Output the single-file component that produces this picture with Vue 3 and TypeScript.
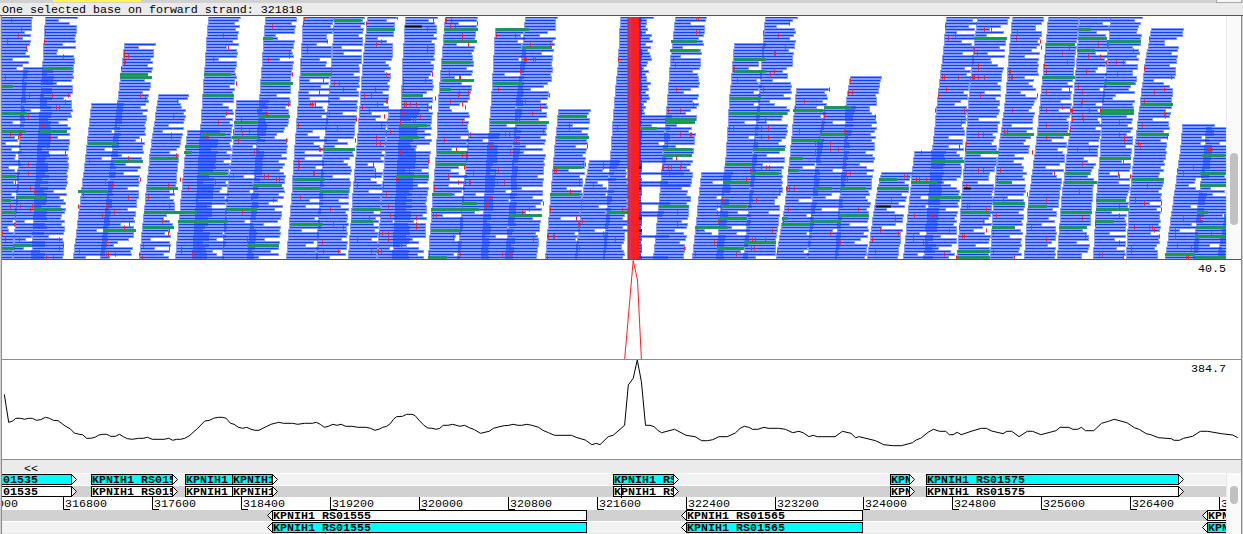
<script setup lang="ts">
interface Stack { top: number; end: number; edge: number[][]; width: number }
interface Gene { x1: number; x2: number; label: string; tip: boolean; textX?: number }

const ROW = 3
const FIRST = 17
const LAST = 257
const CLIP_L = 2
const CLIP_R = 1226

// top | y,x y,x ... of the left edge | read width | optional last y
const stackSource = `
17|17,0 257,-19|33
68|68,23 140,19 257,13|32
17|17,45 257,31|33
103|103,91 150,86 257,73|33
44|44,124 103,117 150,112 257,100|32
95|95,158 150,150 257,139|31
131|131,187 257,175|33
17|17,208 100,202 131,200 200,196 257,192|33
101|101,236 150,232 200,226 257,222|33
17|17,265 100,259 150,256 257,247|32
17|17,303 100,298 150,294 200,291 257,286|32
17|17,334 67,331 100,328 150,323 200,319 257,316|31
17|17,367 67,362 100,360 150,356 200,352 257,348|30
17|17,405 67,402 100,401 150,398 257,392|33
110|110,388 200,381 257,377|32
17|17,445 100,438 150,436 200,432 257,428|33
134|134,468 257,457|32
29|29,495 100,491 150,487 200,484 257,481|33
17|17,525 80,519 100,516 150,513 200,510 257,505|33
110|110,558 150,554 200,550 257,545|33
161|161,589 190,583 257,575|31
17|17,620 60,618 100,614 200,607 257,603|25
17|17,636 110,632|18|113
116|116,639 158,634|33|158
17|17,675 60,670 100,667 150,663 200,659 257,653|32
173|173,701 257,692|32
44|44,734 100,729 150,726 200,721 257,716|32
17|17,765 50,762 100,758 150,753 200,749 257,743|33
89|89,796 130,792 150,790 200,785 257,776|33
107|107,824 150,817 200,812 257,807|32
77|77,850 100,846 150,844 200,839 257,835|32
173|173,881 200,875 257,867|32
152|152,914 190,910 257,903|32
17|17,946 50,943 100,937 150,932 200,928 257,924|32
17|17,977 50,973 100,968 150,965 200,961 257,957|33
17|17,1012 60,1008 100,1005 150,998 200,993 257,990|32
17|17,1048 100,1040 150,1035 200,1028 257,1024|32
17|17,1079 50,1077 100,1073 150,1067 200,1061 257,1057|32
17|17,1110 60,1107 100,1102 150,1100 200,1096 257,1093|33
29|29,1151 60,1145 100,1140 150,1134 200,1129 257,1126|33
125|125,1182 150,1180 200,1173 257,1165|33
128|128,1206 160,1203 200,1198 257,1193|33
215|215,1225 257,1217|32`

const stacks: Stack[] = stackSource.trim().split('\n').map((line) => {
  const [top, edge, width, end] = line.split('|')
  return { top: +top, edge: edge.split(' ').map((p) => p.split(',').map(Number)), width: +width, end: end ? +end : LAST }
})

let seed = 4711
function rnd(): number {
  seed = (seed * 1664525 + 1013904223) % 4294967296
  return seed / 4294967296
}
function leftAt(edge: number[][], y: number): number {
  for (let i = 1; i < edge.length; i++) {
    const [y0, x0] = edge[i - 1]
    const [y1, x1] = edge[i]
    if (y <= y1) return x0 + ((x1 - x0) * (y - y0)) / (y1 - y0)
  }
  return edge[edge.length - 1][1]
}
function bar(x1: number, x2: number, y: number, h: number): string {
  const a = Math.max(CLIP_L, Math.round(x1))
  const b = Math.min(CLIP_R, Math.round(x2))
  return b > a ? `M${a} ${y}H${b}v${h}H${a}z` : ''
}

const halos: string[] = []
let cores = ''
for (const s of stacks) {
  let d = ''
  for (let y = FIRST; y <= s.end; y += ROW) {
    if (y < s.top - 1) continue
    const l = leftAt(s.edge, Math.max(y, s.top))
    let trim = rnd() * 1.6
    const r = rnd()
    if (s.width < 30) trim = rnd() * 8
    else if (r > 0.87) trim = 8 + rnd() * 14
    else if (r > 0.6) trim = rnd() * 8
    const right = l + s.width - (y < s.top + 3 ? 0 : trim)
    d += bar(l, right, y - 1, 3)
    cores += bar(l + 1, right - 1, y, 1)
  }
  halos.push(d)
}
// reads that bridge the gap right of the selected base
const bridges = [[161, 666], [164, 642], [167, 642], [173, 684], [182, 668], [185, 690], [203, 670], [212, 664], [215, 662], [236, 669], [257, 668]]
let extra = ''
for (const [y, x] of bridges) {
  extra += bar(636, x, y - 1, 3)
  cores += bar(636, x - 1, y, 1)
}
halos.push(extra)
let fringe = ''
for (let y = FIRST; y <= LAST; y += ROW) {
  fringe += bar(638, 641 + Math.round(rnd()), y - 1, 3)
  cores += bar(638, 641, y, 1)
}
halos.push(fringe, fringe)

// Tracks are listed in third-pixel units per tile: tile origin, then x1-x2,y
const greenSource: [number, string][] = [
  [0, '128-217,205 6-40,259 6-80,340 6-78,394 120-202,394 6-48,529 6-34,601 48-137,592 102-187,628 6-47,637 40-95,736 6-42,745 360-445,223 360-457,232 263-348,430 338-430,484 235-325,574 308-407,691 452-535,475 440-535,565 433-590,637 430-523,682 555-598,439 552-577,457 535-685,664 611-692,223 609-703,286 603-675,403 597-682,520 702-775,367 696-775,412 675-770,628 790-820,115 782-880,250 773-870,349 760-847,556 742-838,736 903-960,223 880-960,538 880-960,565 873-960,673'],
  [310, '0-67,223 72-153,62 170-255,88 0-45,538 0-30,565 30-118,574 40-135,448 128-213,628 122-190,664 0-40,673 275-340,286 268-352,376 270-328,412 258-358,529 353-410,772 403-505,88 403-502,124 395-484,187 395-493,241 391-424,268 380-468,457 377-467,493 365-425,583 363-507,628 363-450,691 455-502,610 557-658,88 636-727,142 548-635,250 542-718,367 600-697,646 746-830,349 740-838,412 728-817,502 720-811,583 890-955,637'],
  [600, '214-290,124 211-296,151 197-287,358 197-285,367 190-277,448 190-277,466 120-170,385 176-268,619 403-497,178 403-497,214 391-482,295 388-562,340 458-556,448 374-455,493 452-538,520 369-447,547 362-442,619 355-442,655 285-383,682 432-527,727 350-432,745 672-752,322 580-668,331 661-735,403 575-662,421 569-610,475 565-596,511 645-697,565 720-797,565 547-565,655 630-722,664 545-630,673 716-808,646 836-892,538 832-926,565 932-990,547'],
  [913, '182-283,115 158-257,457 53-153,484 0-73,547 47-143,592 145-232,637 133-230,754 133-232,772 236-307,682 241-337,610 254-296,547 269-362,403 400-485,133 388-485,232 374-470,403 345-403,619 498-535,88 495-583,115 583-683,124 491-545,151 573-662,250 562-664,331 562-662,340 560-655,475 458-532,520 455-552,547 444-538,637 438-523,682 550-640,601 548-648,628 547-602,664 684-779,313 674-767,403 658-752,538 757-845,763 868-935,466 862-939,520 862-939,556 853-886,637 850-939,682 845-939,709 845-939,772 932-939,646'],
]
const blackSource: [number, string][] = [
  [310, '284-336,79'],
  [600, '828-872,619 116-125,502 116-125,565 116-125,655 116-125,691'],
  [913, '152-175,565'],
]
const snap = (v: number): number => FIRST + ROW * Math.round((v / 3 - FIRST - 0.5) / ROW)
function tracks(source: [number, string][]): { halo: string; core: string } {
  let halo = ''
  let core = ''
  for (const [origin, list] of source) {
    for (const item of list.split(' ')) {
      const [span, y] = item.split(',')
      const [a, b] = span.split('-').map((n) => origin + +n / 3)
      const row = snap(+y)
      halo += bar(a, b, row - 1, 3)
      core += bar(a + 1, b - 1, row, 1)
    }
  }
  return { halo, core }
}
const green = tracks(greenSource)
const black = tracks(blackSource)

const snpSource: [number, string][] = [
  [0, '34,62 64,88 55,106 22,124 79,142 136,97 133,124 190,169 16,232 88,286 157,286 205,286 196,304 169,322 178,322 85,349 128,376 31,403 61,403 55,412 151,412 142,439 196,457 85,493 85,520 46,547 91,565 103,574 31,619 61,619 97,619 91,628 43,673 7,700 16,718 58,718 178,718 190,736 178,745 106,772 139,772 160,772 373,160 373,169 385,169 373,187 376,187 364,205 421,286 436,295 352,313 424,421 385,475 268,484 421,538 316,547 336,556 250,583 385,592 235,619 319,619 343,637 307,646 388,673 373,682 319,727 238,754 319,763 325,763 346,763 532,304 520,349 514,403 514,412 529,466 541,538 505,556 520,574 445,592 508,619 487,664 505,700 508,691 430,736 508,745 544,745 544,754 417,763 427,772 577,763 670,106 685,142 640,178 709,250 655,367 679,340 619,412 646,547 565,565 700,394 724,358 724,385 727,403 748,394 715,421 763,457 700,529 766,529 793,529 805,529 829,538 838,538 754,592 820,601 727,637 670,709 742,718 754,709 754,718 817,79 868,160 868,169 805,178 877,223 865,313 772,331 799,340 859,421 922,142 922,151 904,187 910,70 913,53 931,313 937,313 946,313 895,376 895,484 898,493 895,502 940,520 943,520 901,592 958,277 958,448'],
  [310, '262,53 169,70 370,62 52,124 214,124 199,133 352,88 352,142 352,151 229,223 367,223 40,241 73,250 88,250 346,241 280,241 280,250 280,268 100,268 196,268 28,277 163,286 184,286 375,295 2,313 7,313 16,313 229,304 232,304 202,313 283,313 289,313 301,313 319,313 157,322 352,322 364,322 178,331 277,340 58,340 223,349 331,349 310,358 316,358 139,358 271,367 214,376 82,385 241,394 199,412 136,421 199,430 211,430 28,448 31,448 271,457 191,493 355,484 196,511 298,511 10,520 13,520 196,529 136,538 259,538 142,556 220,556 373,565 229,583 286,583 61,628 235,619 178,655 241,646 262,646 370,646 379,646 319,655 319,673 319,682 70,673 100,682 208,700 217,700 235,700 286,709 142,718 235,718 37,727 274,736 40,754 85,754 184,754 205,754 214,754 358,763 406,62 409,62 424,62 421,79 436,79 502,70 457,106 457,115 475,133 418,214 418,223 448,232 451,232 448,277 475,277 445,286 421,304 457,313 466,322 457,367 481,403 403,421 439,448 457,466 469,466 463,502 415,529 490,520 445,547 466,547 478,547 481,547 430,709 451,763 559,106 616,106 661,133 721,133 643,178 646,178 649,178 670,178 676,178 631,214 565,268 646,304 718,286 691,322 667,340 629,358 586,403 598,403 619,421 700,394 541,439 601,457 565,511 556,520 562,547 583,547 526,592 541,592 529,610 529,619 700,610 658,628 637,637 520,691 670,718 577,763 586,763 601,763 778,376 778,385 832,439 820,493 826,493 733,511 739,511 808,547 850,556 781,574 721,628 799,655 817,664 805,673 712,709 715,709 730,709 733,709 808,745 712,772 880,493 880,502 880,700 916,718 925,178 922,385 937,628'],
  [600, '289,53 295,53 289,97 298,97 220,178 226,196 229,268 280,313 205,331 241,331 241,403 271,403 274,403 208,412 202,430 229,475 244,493 187,502 190,502 205,502 214,502 241,502 208,520 232,637 232,673 253,745 568,70 490,97 535,106 556,142 523,160 526,160 400,205 403,205 523,214 511,223 412,241 490,268 478,286 496,358 388,385 400,385 484,385 505,385 484,412 505,412 484,502 499,502 508,502 451,511 439,538 538,574 367,601 469,601 352,619 352,637 364,628 355,664 292,691 517,691 457,718 466,718 496,718 343,727 454,745 463,745 286,763 409,763 532,754 688,268 613,304 586,322 736,322 673,349 826,349 751,241 745,277 757,277 664,394 598,394 733,394 646,430 652,430 691,430 691,448 715,448 646,457 751,520 739,520 724,529 742,538 559,565 562,565 568,565 583,565 565,628 775,628 634,646 550,664 718,673 691,700 721,727 913,529 922,529 874,601 886,655 841,691 895,700 817,718 826,754'],
  [913, '97,79 127,106 106,115 91,178 88,232 94,232 136,232 178,232 181,232 184,232 196,232 214,232 214,88 235,88 184,151 193,160 196,196 196,205 100,268 76,286 202,286 67,331 154,331 145,367 196,403 211,403 139,439 157,448 160,430 25,457 55,457 157,502 196,511 211,511 10,538 19,538 40,538 160,556 163,619 169,619 220,628 58,646 61,655 211,664 37,682 139,682 109,691 220,691 148,709 154,709 31,727 94,763 31,772 130,772 4,646 2,709 2,718 313,97 310,115 382,124 385,142 289,214 292,214 289,232 295,232 298,232 373,286 298,331 274,394 283,394 358,457 262,511 253,538 343,583 271,601 241,700 241,754 304,772 250,646 355,682 469,142 448,160 397,169 463,187 394,196 400,214 469,268 400,277 385,322 448,322 400,331 472,331 475,331 478,331 400,376 472,385 400,412 424,520 400,601 400,718 556,133 583,133 526,169 562,169 520,214 496,259 508,277 508,304 505,313 529,331 562,331 508,349 511,358 478,358 493,448 529,448 508,493 499,574 508,655 517,709 661,151 580,187 610,187 631,187 613,223 619,367 619,403 634,412 634,421 631,484 616,520 619,529 652,529 667,601 694,610 745,610 745,628 619,619 619,646 547,673 664,682 709,682 718,682 724,691 739,709 619,727 655,745 655,754 559,763 568,763 631,772 709,115 694,205 775,232 754,268 724,277 694,304 754,340 757,349 688,376 763,412 676,430 682,439 703,556 886,448 892,448 841,502 793,511 811,520 865,583 811,655 787,691 787,709 862,655 895,700 937,709 793,736 835,745 820,772 826,772'],
]
let snps = ''
let snpGlow = ''
for (const [origin, list] of snpSource) {
  for (const item of list.split(' ')) {
    const [x, y] = item.split(',').map(Number)
    const px = Math.floor(origin + x / 3)
    const row = snap(y)
    snps += `M${px} ${row - 1}h1v3h-1z`
    snpGlow += `M${px} ${row - 2}h1v5h-1z`
  }
}

function polyline(origin: number, scale: number, base: number, list: string): string {
  return list.split(' ').map((p) => {
    const [x, y] = p.split(',').map(Number)
    return `${(origin + x / scale).toFixed(1)},${(base + y / 3).toFixed(1)}`
  }).join(' ')
}
const coverage =
  polyline(0, 2.529, 350, '11,133 22,217 32,213 40,205 52,205 62,208 72,205 82,205 92,211 103,209 115,202 125,205 135,211 147,212 165,228 178,237 188,249 200,253 209,254 219,265 230,265 240,262 250,255 260,253 270,253 280,259 292,259 302,253 312,260 322,266 335,268 350,265 362,265 373,262 385,268 415,268 427,265 437,271 447,268 457,268 467,265 478,258 500,235 518,213 530,211 540,205 552,202 563,202 572,205 583,220 592,223 603,232 614,235 624,232 635,238 645,241 655,241 665,235 685,223 705,217 717,220 740,220 753,223 770,220 790,220 800,217 810,223 820,232 830,229 842,223 852,226 863,223 874,229 890,229 905,232 925,232 937,235 948,241 960,237 968,232 978,229 988,220 995,208 1003,200 1018,199 1028,193 1042,193 1050,197 1060,211 1072,226 1082,234 1092,235 1103,238 1112,235 1121,226 1133,226 1145,223 1163,229 1175,226 1187,233 1200,239 1215,250 1237,244 1248,235 1260,231 1275,227 1287,226 1298,223 1310,226 1320,226 1332,223 1345,226 1362,232 1373,241 1387,248 1402,256 1445,256 1457,262 1480,270 1497,284 1508,280') +
  ' ' +
  polyline(600, 2.4386, 250, '0,584 20,560 32,556 60,526 69,405 81,385 91,330 101,395 111,526 122,526 132,530 141,541 150,548 182,538 210,556 232,560 248,572 262,572 275,569 290,560 310,560 330,549 342,535 352,529 363,532 372,538 385,538 400,532 410,535 435,535 452,538 470,548 485,544 495,548 510,560 520,556 530,560 573,560 591,544 612,550 623,563 632,560 672,572 692,584 715,587 735,587 762,578 772,569 782,565 800,547 813,538 828,544 843,544 852,554 861,554 871,547 881,554 905,544 930,535 942,535 955,543 983,551 992,544 1004,544 1022,560 1042,544 1055,544 1075,554 1112,542 1122,532 1143,532 1153,538 1165,538 1174,532 1184,542 1204,542 1223,520 1240,514 1254,508 1285,518 1303,533 1315,538 1332,551 1343,554 1362,563 1393,566 1400,571 1413,571 1423,565 1445,559 1464,544 1482,544 1515,551 1543,555 1555,563')

const forward: Gene[] = [
  { x1: -30, x2: 71, label: '01535', tip: true, textX: 33 },
  { x1: 91, x2: 172, label: 'KPNIH1 RS015', tip: true },
  { x1: 185, x2: 232, label: 'KPNIH1', tip: false },
  { x1: 232, x2: 272, label: 'KPNIH1', tip: true },
  { x1: 613, x2: 673, label: 'KPNIH1 RS', tip: true },
  { x1: 890, x2: 909, label: 'KPN', tip: true },
  { x1: 926, x2: 1178, label: 'KPNIH1 RS01575', tip: true },
]
const reverse: Gene[] = [
  { x1: 272, x2: 586, label: 'KPNIH1 RS01555', tip: true },
  { x1: 686, x2: 862, label: 'KPNIH1 RS01565', tip: true },
  { x1: 1207, x2: 1290, label: 'KPN', tip: true },
]
const lanes = [
  { y: 474, genes: forward, fill: '#00ffff', dir: 1 },
  { y: 486, genes: forward, fill: '#ffffff', dir: 1 },
  { y: 510, genes: reverse, fill: '#ffffff', dir: -1 },
  { y: 522, genes: reverse, fill: '#00ffff', dir: -1 },
]
function tip(g: Gene, y: number, dir: number): string {
  return dir > 0
    ? `M${g.x2 + 0.5} ${y + 0.5}l5 5l-5 5`
    : `M${g.x1 + 0.5} ${y + 0.5}l-5 5l5 5`
}
const ticks = [-26, 63, 152, 241, 330, 419, 508, 597, 686, 775, 863, 952, 1041, 1130, 1219].map((x, i) => ({ x, label: String(316000 + (i - 1) * 800 + 800) }))
ticks[0].label = '316000'
</script>

<template>
  <div class="viewer">
    <div class="tabstrip"><span class="marker"></span><span class="button"></span></div>
    <div class="status">One selected base on forward strand: 321818</div>

    <section class="reads">
      <svg class="canvas" width="1226" height="243" viewBox="0 16 1226 243" shape-rendering="crispEdges">
        <path v-for="(d, i) in halos" :key="i" :d="d" class="halo" />
        <path :d="cores" class="core" />
        <path :d="green.halo" class="green-halo" />
        <path :d="green.core" class="green-core" />
        <path :d="snpGlow" class="snp-glow" />
        <path :d="snps" class="snp" />
        <rect x="628" y="17" width="11" height="242" class="snp" />
        <rect x="627" y="17" width="1" height="242" class="snp-glow" />
        <rect x="630" y="17" width="1" height="242" class="seam" />
        <rect x="635" y="202" width="1" height="57" class="seam soft" />
        <path :d="black.halo" class="black-halo" />
        <path :d="black.core" class="black-core" />
        <rect x="2" y="16" width="1224" height="1" fill="#ffffff" />
      </svg>
      <div class="gutter reads-gutter"><span class="thumb"></span></div>
    </section>

    <section class="plot">
      <svg width="1241" height="99" viewBox="0 260 1241 99">
        <polyline points="624.7,359 633.2,260.5 637.5,280 641.4,359" class="snp-line" />
      </svg>
      <span class="scale">40.5</span>
    </section>
    <section class="plot">
      <svg width="1241" height="99" viewBox="0 360 1241 99">
        <polyline :points="coverage" class="cov-line" />
      </svg>
      <span class="scale">384.7</span>
    </section>

    <section class="genes">
      <svg class="canvas" width="1226" height="74" viewBox="0 460 1226 74">
        <g shape-rendering="crispEdges">
          <rect x="2" y="473" width="1224" height="61" fill="#ffffff" />
          <rect x="2" y="474" width="1224" height="11" fill="#f2f2f2" />
          <rect x="2" y="486" width="1224" height="11" fill="#d1d1d1" />
          <rect x="2" y="510" width="1224" height="11" fill="#d1d1d1" />
          <rect x="2" y="522" width="1224" height="11" fill="#f2f2f2" />
          <rect x="2" y="533" width="1224" height="1" fill="#e6e6e6" />
        </g>
        <text x="24" y="472" class="mono">&lt;&lt;</text>
        <g v-for="t in ticks" :key="t.x">
          <path :d="`M${t.x + 0.5} 497V509.5H${t.x + 7}`" class="outline" />
          <text :x="t.x + 2" y="507" class="mono">{{ t.label }}</text>
        </g>
        <g v-for="lane in lanes" :key="lane.y">
          <g v-for="g in lane.genes" :key="g.x1">
            <path v-if="g.tip" :d="tip(g, lane.y, lane.dir)" class="tip" />
            <svg :x="g.x1" :y="lane.y" :width="g.x2 - g.x1 + 1" height="11">
              <rect x="0.5" y="0.5" :width="g.x2 - g.x1" height="10" :fill="lane.fill" />
              <text :x="g.textX ?? 1" y="9" class="mono bold">{{ g.label }}</text>
              <rect x="0.5" y="0.5" :width="g.x2 - g.x1" height="10" class="outline" />
            </svg>
          </g>
        </g>
        <path d="M621.5 485V498" class="outline" />
      </svg>
      <div class="gutter genes-gutter"><span class="thumb"></span></div>
    </section>
  </div>
</template>

<style>
body { margin: 0; overflow: hidden; }
</style>

<style scoped>
.viewer {
  position: relative;
  width: 1243px;
  height: 534px;
  display: flex;
  flex-direction: column;
  overflow: hidden;
  background: #ebebeb;
  font-family: "Liberation Mono", monospace;
  font-size: 11.67px;
  color: #000;
}
.viewer::before,
.viewer::after {
  content: "";
  position: absolute;
  top: 16px;
  bottom: 0;
  width: 1px;
  background: #8c8c8c;
  z-index: 2;
}
.viewer::before { left: 1px; box-shadow: -1px 0 #d0d0d0; }
.viewer::after { right: 1px; box-shadow: 1px 0 #d0d0d0; }
.tabstrip {
  height: 3px;
  display: flex;
  justify-content: space-between;
  background: #d1d1d1;
}
.marker { width: 88px; height: 2px; margin-left: 53px; background: #fff94f; }
.button {
  width: 24px;
  height: 2px;
  margin-right: 1px;
  background: #f7f7f7;
  border: 1px solid #a8a8a8;
  border-top: 0;
  box-sizing: content-box;
}
.status {
  height: 12px;
  line-height: 14px;
  padding-left: 2px;
  white-space: pre;
  border-bottom: 1px solid #555;
}
.reads {
  height: 243px;
  display: flex;
  background: #fff;
  border-bottom: 1px solid #555;
}
.canvas { flex: none; display: block; }
.gutter {
  width: 15px;
  box-sizing: border-box;
  background: #fafafa;
  border-left: 1px solid #e8e8e8;
}
.thumb {
  display: block;
  width: 8px;
  margin-left: 3px;
  border-radius: 4px;
  background: #c1c1c1;
}
.reads-gutter { padding-top: 137px; }
.reads-gutter .thumb { height: 72px; }
.genes-gutter { margin-top: 13px; padding-top: 13px; }
.genes-gutter .thumb { height: 18px; }
.plot {
  position: relative;
  height: 99px;
  background: #fff;
  border-bottom: 1px solid #8c8c8c;
}
.plot svg { display: block; }
.scale {
  position: absolute;
  top: 2px;
  right: 17px;
  line-height: 14px;
}
.genes { height: 74px; display: flex; }
.halo { fill: #0033ff; opacity: 0.48; }
.core { fill: #1040fa; }
.green-halo { fill: #26956a; }
.green-core { fill: #00a032; }
.black-halo { fill: #000; opacity: 0.5; }
.black-core { fill: #000; }
.snp { fill: #ff1e1a; }
.snp-glow { fill: #ff1e1a; opacity: 0.6; }
.seam { fill: #c03a80; }
.soft { opacity: 0.5; }
.snp-line { fill: none; stroke: #ff1e1a; stroke-width: 1; }
.cov-line { fill: none; stroke: #000; stroke-width: 1; }
.mono { font-family: "Liberation Mono", monospace; font-size: 11.67px; white-space: pre; }
.bold { font-weight: bold; }
.outline { fill: none; stroke: #000; stroke-width: 1; }
.tip { fill: #f7f7f7; stroke: #000; stroke-width: 1; }
</style>
